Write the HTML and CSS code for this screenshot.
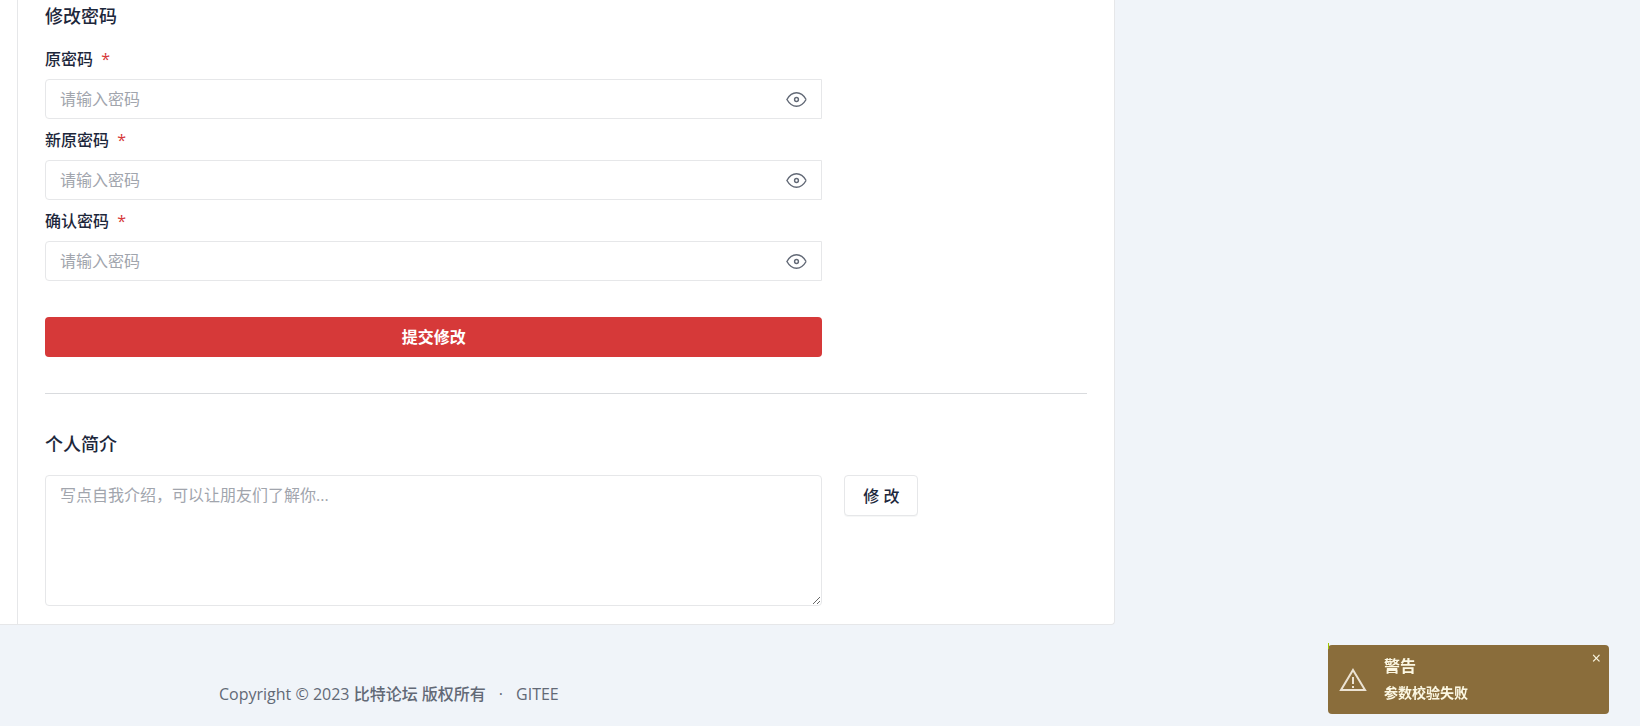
FILE: index.html
```html
<!DOCTYPE html>
<html lang="zh-CN">
  <head>
    <meta charset="UTF-8" />
    <meta name="viewport" content="width=device-width, initial-scale=1.0" />
    <title>比特论坛 - 用户设置</title>
    <link rel="stylesheet" href="styles.css">
  </head>
  <body>
    <main class="card">
      <div class="card-side"></div>
      <div class="card-body">
        <h3 class="card-title">修改密码</h3>
        <form class="settings-row">
          <div class="form-col">
            <label class="form-label" for="oldPassword">原密码 <span class="required">*</span></label>
            <div class="input-group">
              <input type="password" id="oldPassword" placeholder="请输入密码" />
              <button type="button" class="eye" aria-label="显示密码">
                <svg viewBox="0 0 24 24"><circle cx="12" cy="12" r="2" /><path d="M22 12c-2.667 4.667 -6 7 -10 7s-7.333 -2.333 -10 -7c2.667 -4.667 6 -7 10 -7s7.333 2.333 10 7" /></svg>
              </button>
            </div>
            <label class="form-label" for="newPassword">新原密码 <span class="required">*</span></label>
            <div class="input-group">
              <input type="password" id="newPassword" placeholder="请输入密码" />
              <button type="button" class="eye" aria-label="显示密码">
                <svg viewBox="0 0 24 24"><circle cx="12" cy="12" r="2" /><path d="M22 12c-2.667 4.667 -6 7 -10 7s-7.333 -2.333 -10 -7c2.667 -4.667 6 -7 10 -7s7.333 2.333 10 7" /></svg>
              </button>
            </div>
            <label class="form-label" for="repeatPassword">确认密码 <span class="required">*</span></label>
            <div class="input-group">
              <input type="password" id="repeatPassword" placeholder="请输入密码" />
              <button type="button" class="eye" aria-label="显示密码">
                <svg viewBox="0 0 24 24"><circle cx="12" cy="12" r="2" /><path d="M22 12c-2.667 4.667 -6 7 -10 7s-7.333 -2.333 -10 -7c2.667 -4.667 6 -7 10 -7s7.333 2.333 10 7" /></svg>
              </button>
            </div>
            <button type="button" class="btn btn-danger">提交修改</button>
          </div>
        </form>
        <hr />
        <h3 class="card-title"><label for="remark">个人简介</label></h3>
        <form class="settings-row">
          <textarea id="remark" placeholder="写点自我介绍，可以让朋友们了解你..."></textarea>
          <button type="button" class="btn btn-light">修 改</button>
        </form>
      </div>
    </main>

    <footer class="footer">
      <span>Copyright © 2023 <span class="site">比特论坛 版权所有</span></span>
      <span>·</span>
      <a href="#">GITEE</a>
    </footer>

    <div class="toast" role="alert">
      <span class="toast-loader"></span>
      <svg class="toast-icon" viewBox="0 0 28 24"><path d="M14 2L26 22H2z" /><path d="M14 9v7M14 18v2" /></svg>
      <div class="toast-text">
        <h2>警告</h2>
        <p>参数校验失败</p>
      </div>
      <button type="button" class="toast-close" aria-label="关闭">×</button>
    </div>
  </body>
</html>
```
FILE: styles.css
```css
* {
  box-sizing: border-box;
}
body {
  margin: 0;
  font-family: "Open Sans", "Noto Sans CJK SC", sans-serif;
  font-size: 16px;
  line-height: 24px;
  color: #1d273b;
  background: #f0f4f9;
}
input,
textarea,
button {
  font: inherit;
  color: inherit;
}
a {
  color: inherit;
  text-decoration: none;
}
.card {
  display: flex;
  width: 68vw;
  background: #fff;
  border: 1px solid #e6e7e9;
  border-width: 0 1px 1px 0;
  border-bottom-right-radius: 4px;
}
.card-side {
  width: 18px;
  border-right: 1px solid #e6e7e9;
}
.card-body {
  flex: 1;
  padding: 4px 27px 18px;
}
.card-title {
  margin: 0 0 19px;
  font-size: 18px;
  font-weight: 500;
}
.settings-row {
  display: grid;
  grid-template-columns: 16fr 5fr;
  column-gap: 22px;
  align-items: start;
}
.form-label {
  display: block;
  margin-bottom: 8px;
  font-weight: 500;
}
.required {
  margin-left: 4px;
  font-weight: 400;
  color: #d63939;
}
.input-group {
  display: flex;
  height: 40px;
  margin-bottom: 9px;
  border: 1px solid #e6e7e9;
  border-radius: 4px 0 0 4px;
}
.input-group input {
  flex: 1;
  min-width: 0;
  padding: 0 14px;
  border: none;
  background: none;
  outline: none;
}
::placeholder {
  color: #a1a5ad;
  opacity: 1;
}
.eye {
  display: flex;
  align-items: center;
  padding: 0 13px;
  border: none;
  background: none;
}
.eye svg {
  width: 23px;
  height: 23px;
  fill: none;
  stroke: #626976;
  stroke-width: 1.5;
}
.btn {
  border-radius: 4px;
  font-weight: 500;
}
.btn-danger {
  width: 100%;
  height: 40px;
  margin-top: 27px;
  border: none;
  font-weight: 700;
  color: #fff;
  background: #d63939;
}
hr {
  margin: 36px 0 38px;
  border: none;
  border-top: 1px solid #d9dbde;
}
textarea {
  display: block;
  width: 100%;
  height: 131px;
  padding: 7px 14px;
  border: 1px solid #e6e7e9;
  border-radius: 4px;
  outline: none;
  resize: vertical;
}
.btn-light {
  justify-self: start;
  height: 41px;
  padding: 0 18px;
  border: 1px solid #e6e7e9;
  background: #fff;
  box-shadow: 0 1px 0 rgba(29, 39, 59, 0.04);
}
.footer {
  display: flex;
  gap: 13px;
  padding: 57px 18px 18px 219px;
  color: #626976;
}
.site {
  font-weight: 500;
}
.toast {
  position: fixed;
  right: 31px;
  bottom: 12px;
  display: flex;
  align-items: center;
  gap: 17px;
  width: 281px;
  height: 69px;
  padding: 0 11px;
  border-radius: 4px;
  color: #fcf8e3;
  background: #8a6d3b;
}
.toast-loader {
  position: absolute;
  top: -2px;
  left: 0;
  width: 1px;
  height: 6px;
  background: #9ec600;
}
.toast-icon {
  width: 28px;
  height: 24px;
  fill: none;
  stroke: #ece3d3;
  stroke-width: 2;
}
.toast-text h2 {
  margin: 0 0 3px;
  font-size: 16px;
  line-height: 24px;
  font-weight: 700;
}
.toast-text p {
  margin: 0;
  font-size: 14px;
  line-height: 24px;
  font-weight: 700;
}
.toast-close {
  position: absolute;
  top: 3px;
  right: 8px;
  padding: 0;
  border: none;
  background: none;
  line-height: 20px;
}
```
